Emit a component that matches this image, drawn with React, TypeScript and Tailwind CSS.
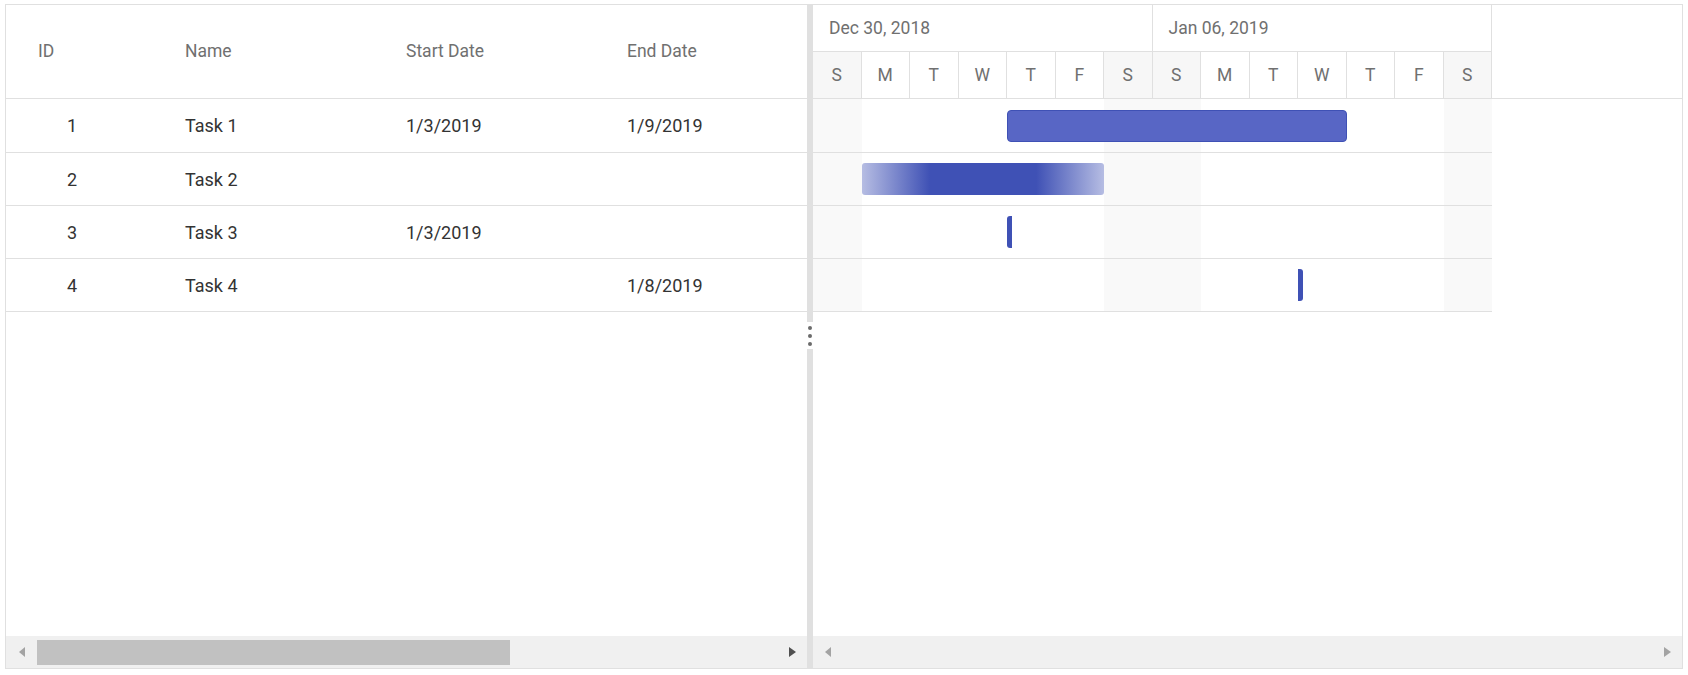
import React from "react";

const DAY = 48.5;
const DAYS = ["S", "M", "T", "W", "T", "F", "S", "S", "M", "T", "W", "T", "F", "S"];
const WEEKS = ["Dec 30, 2018", "Jan 06, 2019"];

type Bar =
  | { kind: "task"; from: number; span: number }
  | { kind: "unscheduled"; from: number; span: number }
  | { kind: "startOnly"; at: number }
  | { kind: "endOnly"; at: number };

const tasks: { id: number; name: string; start: string; end: string; bar: Bar }[] = [
  { id: 1, name: "Task 1", start: "1/3/2019", end: "1/9/2019", bar: { kind: "task", from: 4, span: 7 } },
  { id: 2, name: "Task 2", start: "", end: "", bar: { kind: "unscheduled", from: 1, span: 5 } },
  { id: 3, name: "Task 3", start: "1/3/2019", end: "", bar: { kind: "startOnly", at: 4 } },
  { id: 4, name: "Task 4", start: "", end: "1/8/2019", bar: { kind: "endOnly", at: 10 } },
];

const isWeekend = (i: number) => i % 7 === 0 || i % 7 === 6;

function TaskBar({ bar }: { bar: Bar }) {
  if (bar.kind === "task") {
    return (
      <div
        className="absolute top-1/2 h-[32px] -translate-y-1/2 rounded-[4px] border border-[#3f51b5] bg-[#5866c5]"
        style={{ left: bar.from * DAY, width: bar.span * DAY }}
      />
    );
  }
  if (bar.kind === "unscheduled") {
    return (
      <div
        className="absolute top-1/2 h-[32px] -translate-y-1/2 rounded-[3px] bg-[linear-gradient(to_right,rgba(63,81,181,0.38),#3f51b5_28%,#3f51b5_72%,rgba(63,81,181,0.38))]"
        style={{ left: bar.from * DAY, width: bar.span * DAY }}
      />
    );
  }
  if (bar.kind === "startOnly") {
    return (
      <div
        className="absolute top-1/2 h-[32px] w-[5px] -translate-y-1/2 rounded-l-[3px] bg-[#3f51b5]"
        style={{ left: bar.at * DAY }}
      />
    );
  }
  return (
    <div
      className="absolute top-1/2 h-[32px] w-[5px] -translate-y-1/2 rounded-r-[3px] bg-[#3f51b5]"
      style={{ left: bar.at * DAY }}
    />
  );
}

function ArrowLeft({ dark }: { dark?: boolean }) {
  return (
    <span
      className={
        "block h-0 w-0 border-y-[5.5px] border-r-[6px] border-y-transparent " +
        (dark ? "border-r-[#505050]" : "border-r-[#a3a3a3]")
      }
    />
  );
}

function ArrowRight({ dark }: { dark?: boolean }) {
  return (
    <span
      className={
        "block h-0 w-0 border-y-[5.5px] border-l-[7px] border-y-transparent " +
        (dark ? "border-l-[#505050]" : "border-l-[#a3a3a3]")
      }
    />
  );
}

export default function App() {
  return (
    <div className="min-h-screen bg-white pl-[5px] pt-[4px] font-['Roboto',sans-serif]">
      <div className="flex h-[665px] w-[1678px] border border-[#e0e0e0]">
        {/* grid pane */}
        <div className="flex w-[801px] flex-col overflow-hidden">
          <div className="flex h-[94px] shrink-0 items-center border-b border-[#e0e0e0] text-[17.5px] text-[#707070]">
            <div className="w-[163px] shrink-0 pl-[32px]">ID</div>
            <div className="w-[221px] shrink-0 pl-[16px]">Name</div>
            <div className="w-[221px] shrink-0 pl-[16px]">Start Date</div>
            <div className="w-[221px] shrink-0 pl-[16px]">End Date</div>
          </div>
          {tasks.map((t, i) => (
            <div
              key={t.id}
              className={
                "flex shrink-0 items-center border-b border-[#e0e0e0] text-[18px] text-[#333333] " +
                (i === 0 ? "h-[54px]" : "h-[53px]")
              }
            >
              <div className="w-[163px] shrink-0">
                <div className="w-[132px] text-center">{t.id}</div>
              </div>
              <div className="w-[221px] shrink-0 pl-[16px]">{t.name}</div>
              <div className="w-[221px] shrink-0 pl-[16px]">{t.start}</div>
              <div className="w-[221px] shrink-0 pl-[16px]">{t.end}</div>
            </div>
          ))}
          <div className="flex-1" />
          <div className="flex h-[32px] shrink-0 items-center bg-[#f0f0f0]">
            <div className="flex w-[31px] justify-center">
              <ArrowLeft />
            </div>
            <div className="h-[25px] w-[473px] bg-[#c1c1c1]" />
            <div className="flex-1" />
            <div className="flex w-[30px] justify-center">
              <ArrowRight dark />
            </div>
          </div>
        </div>

        {/* splitter */}
        <div className="flex w-[6px] shrink-0 flex-col">
          <div className="h-[317px] bg-[#e0e0e0]" />
          <div className="flex h-[27px] flex-col items-center justify-center gap-[4px] bg-white">
            <span className="h-[4px] w-[4px] rounded-full bg-[#6b6b6b]" />
            <span className="h-[4px] w-[4px] rounded-full bg-[#6b6b6b]" />
            <span className="h-[4px] w-[4px] rounded-full bg-[#6b6b6b]" />
          </div>
          <div className="flex-1 bg-[#e0e0e0]" />
        </div>

        {/* chart pane */}
        <div className="flex min-w-0 flex-1 flex-col">
          <div className="flex h-[94px] shrink-0 border-b border-[#e0e0e0]">
            <div className="flex w-[679px] shrink-0 flex-col">
              <div className="flex h-[47px] border-b border-[#e0e0e0]">
                {WEEKS.map((w) => (
                  <div
                    key={w}
                    className="flex w-[339.5px] items-center border-r border-[#e0e0e0] pl-[16px] text-[17.5px] text-[#707070]"
                  >
                    {w}
                  </div>
                ))}
              </div>
              <div className="flex flex-1">
                {DAYS.map((d, i) => (
                  <div
                    key={i}
                    className={
                      "flex w-[48.5px] items-center justify-center border-r border-[#e0e0e0] text-[17.5px] text-[#707070] " +
                      (isWeekend(i) ? "bg-[#f7f7f7]" : "bg-white")
                    }
                  >
                    {d}
                  </div>
                ))}
              </div>
            </div>
            <div className="flex-1" />
          </div>

          {tasks.map((t, r) => (
            <div
              key={t.id}
              className={
                "relative flex w-[679px] shrink-0 border-b border-[#e0e0e0] " +
                (r === 0 ? "h-[54px]" : "h-[53px]")
              }
            >
              {DAYS.map((_, i) => (
                <div
                  key={i}
                  className={"w-[48.5px] shrink-0 " + (isWeekend(i) ? "bg-[#f9f9f9]" : "")}
                />
              ))}
              <TaskBar bar={t.bar} />
            </div>
          ))}
          <div className="flex-1" />
          <div className="flex h-[32px] shrink-0 items-center bg-[#f0f0f0]">
            <div className="flex w-[30px] justify-center">
              <ArrowLeft />
            </div>
            <div className="flex-1" />
            <div className="flex w-[29px] justify-center">
              <ArrowRight />
            </div>
          </div>
        </div>
      </div>
    </div>
  );
}
